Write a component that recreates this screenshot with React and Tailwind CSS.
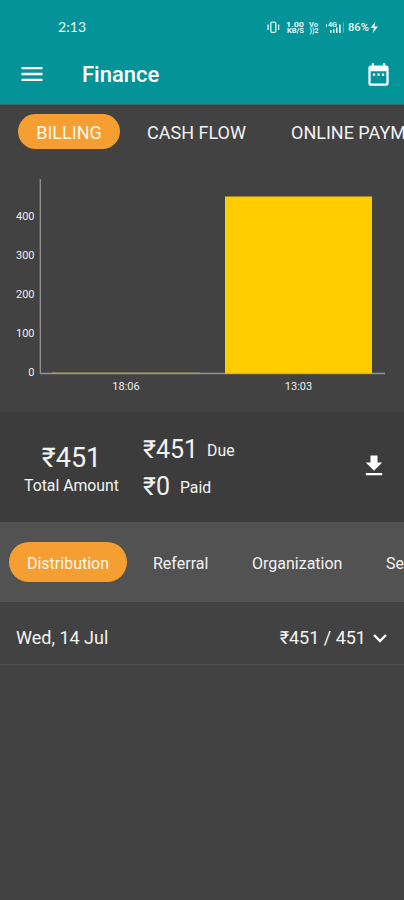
import React from "react";
import { MdMenu, MdDateRange, MdGetApp } from "react-icons/md";

const ticks = [
  { label: "400", y: 41 },
  { label: "300", y: 80 },
  { label: "200", y: 119 },
  { label: "100", y: 158 },
  { label: "0", y: 197 },
];

function StatusBar() {
  return (
    <div className="flex h-[46px] items-start justify-between pl-[58px] pr-[24px] pt-[18px] text-[#e3f8f8]">
      <span className="font-[Lato,sans-serif] text-[14px] leading-[18px] tracking-[0.1px]">2:13</span>
      <svg width="113" height="17" viewBox="0 -1 113 17" fill="currentColor" fontFamily="Roboto, sans-serif">
        <g fill="none" stroke="currentColor" strokeWidth="1.3">
          <rect x="3.8" y="3.2" width="5" height="10.2" rx="1.5" />
          <path d="M1 5.5v5.5M11.6 5.5v5.5" />
        </g>
        <text x="19" y="7.6" fontSize="8" fontWeight="700" textLength="18" lengthAdjust="spacingAndGlyphs">1.00</text>
        <text x="20" y="14.2" fontSize="7.5" fontWeight="700" textLength="17" lengthAdjust="spacingAndGlyphs">KB/S</text>
        <text x="42" y="7.6" fontSize="7.5" fontWeight="700" textLength="9" lengthAdjust="spacingAndGlyphs">Vo</text>
        <text x="42.5" y="14.2" fontSize="7.5" fontWeight="700" textLength="9" lengthAdjust="spacingAndGlyphs">))2</text>
        <text x="61" y="8" fontSize="7" fontWeight="700" textLength="9" lengthAdjust="spacingAndGlyphs">4G</text>
        <path d="M63 11h1.5v3H63zM66 10h1.5v4H66zM69 8.5h1.5V14H69zM72 5.5h1.7V14H72zM59 5h1v3h-1z" />
        <path d="M76 3h1v11h-1z" opacity="0.35" />
        <text x="81" y="12.2" fontSize="11" fontWeight="500" textLength="21" lengthAdjust="spacingAndGlyphs">86%</text>
        <path d="M108.5 2.5L103.5 9h3.4l-1.4 5.5L111 7.4h-3.5z" />
      </svg>
    </div>
  );
}

function Chart() {
  return (
    <svg width="404" height="237" viewBox="0 0 404 237" className="block shrink-0" fontFamily="Roboto, sans-serif" fontSize="11" fill="#eeeeee">
      {ticks.map((t) => (
        <text key={t.label} x="34.5" y={t.y + 4} textAnchor="end">{t.label}</text>
      ))}
      <path d="M40.3 4v194.5H385" fill="none" stroke="#929292" strokeWidth="1.3" />
      <path d="M52 198.2h148" stroke="#a89c58" strokeWidth="1.2" />
      <rect x="225" y="21.5" width="147" height="177" fill="#ffcc00" />
      <text x="126" y="214.7" textAnchor="middle">18:06</text>
      <text x="298.5" y="214.7" textAnchor="middle">13:03</text>
    </svg>
  );
}

export default function App() {
  return (
    <div className="flex h-[900px] w-[404px] flex-col overflow-hidden bg-[#424242] font-[Roboto,sans-serif] text-[#f3f3f3]">
      <header className="h-[105px] shrink-0 border-b border-[#34686a] bg-[#049399] text-white">
        <StatusBar />
        <div className="flex h-[56px] items-center pl-[18px] pr-[12px]">
          <MdMenu size={28} />
          <h1 className="ml-[36px] pt-px text-[22px] font-medium leading-7">Finance</h1>
          <MdDateRange size={27} className="ml-auto" />
        </div>
      </header>

      <nav className="flex h-[70px] shrink-0 items-start overflow-hidden whitespace-nowrap pl-[18px] pt-[9px] text-[18px] leading-[34px]">
        <span className="h-[35px] w-[102px] shrink-0 rounded-full bg-[#f59e32] pt-[2px] text-center text-[#fff7e8]">BILLING</span>
        <span className="ml-[27px] w-[144px] shrink-0 pt-[2px]">CASH FLOW</span>
        <span className="shrink-0 pt-[2px]">ONLINE PAYMENTS</span>
      </nav>

      <Chart />

      <section className="flex h-[110px] shrink-0 bg-[#3c3c3c]">
        <div className="w-[143px] pt-[30px] text-center">
          <div className="text-[27px] leading-8">₹451</div>
          <div className="mt-[2px] text-[15.8px] leading-5">Total Amount</div>
        </div>
        <div className="pt-[19px]">
          <div className="flex h-[37px] items-center leading-[34px]">
            <span className="text-[25px]">₹451</span>
            <span className="ml-[9px] pt-[2px] text-[15.8px]">Due</span>
          </div>
          <div className="flex h-[37px] items-center leading-[34px]">
            <span className="text-[25px]">₹0</span>
            <span className="ml-[10px] pt-[2px] text-[15.8px]">Paid</span>
          </div>
        </div>
        <MdGetApp size={28} className="ml-auto mr-[16px] mt-[40px] text-white" />
      </section>

      <nav className="flex h-[80px] shrink-0 items-center overflow-hidden whitespace-nowrap bg-[#525252] pl-[9px] text-[16px] leading-[37px]">
        <span className="h-[40px] w-[118px] shrink-0 rounded-full bg-[#f59e32] pt-[3px] text-center text-[#fff7e8]">Distribution</span>
        <span className="ml-[26px] w-[99px] shrink-0 pt-[3px]">Referral</span>
        <span className="w-[134px] shrink-0 pt-[3px]">Organization</span>
        <span className="shrink-0 pt-[3px]">Service</span>
      </nav>

      <div className="flex h-[63px] shrink-0 items-center border-b border-[#555555] pl-4 pr-[12px] pt-[8px] text-[18px]">
        <span>Wed, 14 Jul</span>
        <span className="ml-auto">₹451 / 451</span>
        <svg width="24" height="24" viewBox="0 0 24 24" className="ml-[2px] mt-px" fill="none" stroke="white" strokeWidth="2.4">
          <path d="M6 9l6 6 6-6" />
        </svg>
      </div>
    </div>
  );
}
